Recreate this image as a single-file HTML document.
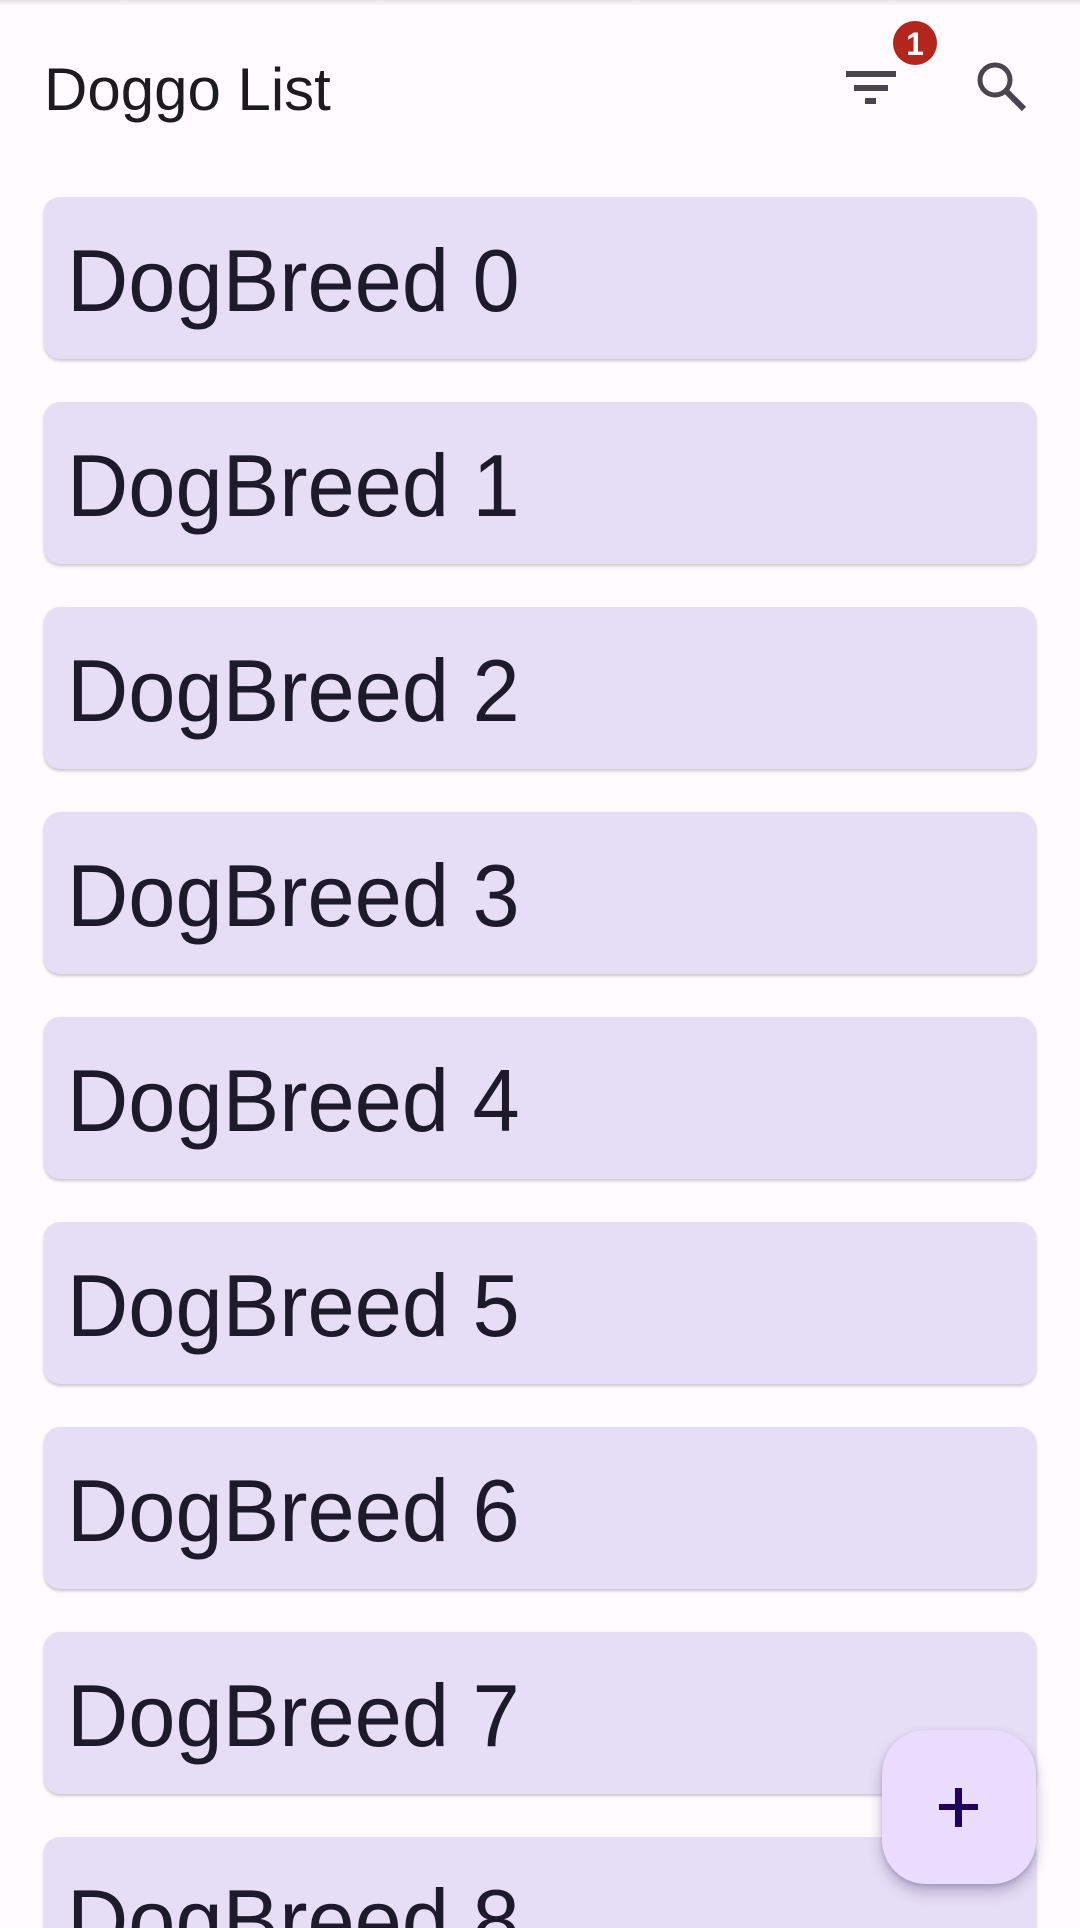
<!DOCTYPE html>
<html><head><meta charset="utf-8"><style>
html{margin:0;width:1080px;height:1928px;overflow:hidden}
body{margin:0;width:1080px;height:1928px;background:#fffbfe;overflow:hidden;font-family:"Liberation Sans",Roboto,sans-serif;position:relative}
.top{position:absolute;left:0;top:0;width:1080px;height:6px;background:linear-gradient(#e6e4e8,#fffbfe)}
.title{position:absolute;left:44px;top:55px;font-size:60px;color:#1c1b1f;line-height:70px}
.card{position:absolute;left:44px;width:992px;height:162px;background:#e6def5;border-radius:16px;box-shadow:0 2px 3px rgba(0,0,0,0.22)}
.card span{position:absolute;left:23px;top:40px;font-size:88px;line-height:88px;color:#1d1a2c;transform:scaleX(0.964);transform-origin:left;white-space:nowrap}
.fab{position:absolute;left:882px;top:1730px;width:154px;height:154px;border-radius:44px;background:#eadcfe;box-shadow:0 8px 14px rgba(60,40,100,0.28),0 2px 5px rgba(0,0,0,0.15)}
</style></head><body>
<div class="top"></div>
<div class="title">Doggo List</div>
<svg style="position:absolute;left:0;top:0" width="1080" height="140">
<g fill="#49454f"><rect x="846" y="71" width="50" height="6"/><rect x="854" y="85" width="34" height="6"/><rect x="865" y="98" width="11" height="6"/></g>
<circle cx="915" cy="43" r="22" fill="#b3261e"/>
<text x="915" y="55" fill="#fff" font-size="32" font-weight="bold" text-anchor="middle" font-family="Liberation Sans,sans-serif">1</text>
<circle cx="995" cy="80" r="15" fill="none" stroke="#49454f" stroke-width="5"/>
<line x1="1006" y1="91" x2="1024" y2="109" stroke="#49454f" stroke-width="6"/>
</svg>
<div class="card" style="top:197px"><span>DogBreed 0</span></div>
<div class="card" style="top:402px"><span>DogBreed 1</span></div>
<div class="card" style="top:607px"><span>DogBreed 2</span></div>
<div class="card" style="top:812px"><span>DogBreed 3</span></div>
<div class="card" style="top:1017px"><span>DogBreed 4</span></div>
<div class="card" style="top:1222px"><span>DogBreed 5</span></div>
<div class="card" style="top:1427px"><span>DogBreed 6</span></div>
<div class="card" style="top:1632px"><span>DogBreed 7</span></div>
<div class="card" style="top:1837px;height:120px;overflow:hidden"><span>DogBreed 8</span></div>
<div class="fab"><svg width="154" height="154"><g fill="#21005d"><rect x="73" y="58" width="7" height="39"/><rect x="57" y="74" width="39" height="6"/></g></svg></div>
</body></html>
